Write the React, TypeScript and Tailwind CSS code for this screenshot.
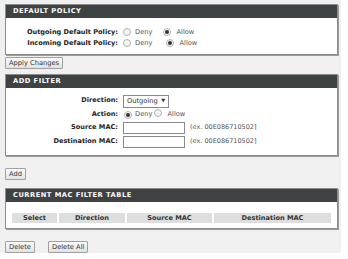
import React from "react";

const font = { fontFamily: '"DejaVu Sans", Verdana, sans-serif' };

function Radio({ checked }: { checked?: boolean }) {
  return (
    <span className="inline-flex h-[8px] w-[8px] items-center justify-center rounded-full border border-[#b5b5b5] bg-[#f4f4f4]">
      {checked && <span className="h-[4px] w-[4px] rounded-full bg-[#333]" />}
    </span>
  );
}

function Btn({ children }: { children: React.ReactNode }) {
  return (
    <button className="h-[12px] rounded-[1px] border border-[#a0a0a0] bg-gradient-to-b from-[#fbfbfb] to-[#e2e2e2] px-[3px] text-[6.7px] leading-[10px] text-[#333]">
      {children}
    </button>
  );
}

function Header({ children }: { children: React.ReactNode }) {
  return (
    <div className="h-[13px] bg-[#3e4243] pl-[7px] text-[6.7px] font-bold leading-[13px] tracking-[0.5px] text-white">
      {children}
    </div>
  );
}

function Label({ children }: { children: React.ReactNode }) {
  return (
    <div className="w-[112px] shrink-0 text-right text-[6.6px] font-bold text-[#222]">{children}</div>
  );
}

export default function App() {
  return (
    <div className="h-[259px] w-[348px] bg-white" style={font}>
      <div className="h-[253px] w-[341px] bg-[#f0f0f0] px-[5px] pt-[4px]">
        {/* Default policy */}
        <div className="w-[333px] border border-[#8c8c8c] bg-white shadow-[1px_1px_0_#9a9a9a]">
          <Header>DEFAULT POLICY</Header>
          <div className="flex flex-col pb-[5px] pt-[9px]">
            <div className="flex h-[11px] items-center">
              <Label>Outgoing Default Policy:</Label>
              <div className="ml-[5px] flex items-center text-[6.7px] text-[#555]">
                <Radio />
                <span className="ml-[4px]">Deny</span>
                <span className="ml-[11px]"><Radio checked /></span>
                <span className="ml-[5px]">Allow</span>
              </div>
            </div>
            <div className="flex h-[11px] items-center">
              <Label>Incoming Default Policy:</Label>
              <div className="ml-[5px] flex items-center text-[6.7px] text-[#555]">
                <Radio />
                <span className="ml-[4px]">Deny</span>
                <span className="ml-[14px]"><Radio checked /></span>
                <span className="ml-[5px]">Allow</span>
              </div>
            </div>
          </div>
        </div>
        <div className="mt-[2px] flex">
          <Btn>Apply Changes</Btn>
        </div>

        {/* Add filter */}
        <div className="mt-[5px] w-[333px] border border-[#8c8c8c] bg-white shadow-[1px_1px_0_#9a9a9a]">
          <Header>ADD FILTER</Header>
          <div className="flex flex-col pb-[7px] pt-[6px]">
            <div className="flex h-[14px] items-center">
              <Label>Direction:</Label>
              <div className="ml-[5px] flex h-[13px] w-[46px] items-center justify-between border border-[#8a8a8a] bg-white px-[3px] text-[6.7px] text-[#333]">
                <span>Outgoing</span>
                <span className="text-[5px]">▼</span>
              </div>
            </div>
            <div className="mt-[1px] flex h-[11px] items-center">
              <Label>Action:</Label>
              <div className="ml-[6px] flex items-center text-[6.7px] text-[#555]">
                <Radio checked />
                <span className="ml-[3px]">Deny</span>
                <span className="ml-[2px]"><Radio /></span>
                <span className="ml-[5px]">Allow</span>
              </div>
            </div>
            <div className="mt-[2px] flex h-[12px] items-center">
              <Label>Source MAC:</Label>
              <div className="ml-[5px] h-[12px] w-[62px] border border-[#8a8a8a] bg-white" />
              <span className="ml-[5px] text-[6.5px] text-[#555]">(ex. 00E086710502]</span>
            </div>
            <div className="mt-[2px] flex h-[12px] items-center">
              <Label>Destination MAC:</Label>
              <div className="ml-[5px] h-[12px] w-[62px] border border-[#8a8a8a] bg-white" />
              <span className="ml-[5px] text-[6.5px] text-[#555]">(ex. 00E086710502]</span>
            </div>
          </div>
        </div>
        <div className="mt-[12px] flex">
          <Btn>Add</Btn>
        </div>

        {/* Current MAC filter table */}
        <div className="mt-[8px] w-[333px] border border-[#8c8c8c] bg-white shadow-[1px_1px_0_#9a9a9a]">
          <Header>CURRENT MAC FILTER TABLE</Header>
          <div className="px-[6px] pb-[5px] pt-[11px]">
            <div className="flex h-[10px] gap-[2px] text-[6.6px] font-bold leading-[10px] text-[#333]">
              <div className="w-[45px] bg-[#dedede] text-center">Select</div>
              <div className="w-[66px] bg-[#dedede] text-center">Direction</div>
              <div className="w-[85px] bg-[#dedede] text-center">Source MAC</div>
              <div className="flex-1 bg-[#dedede] text-center">Destination MAC</div>
            </div>
          </div>
        </div>
        <div className="mt-[12px] flex gap-[13px]">
          <Btn>Delete</Btn>
          <Btn>Delete All</Btn>
        </div>
      </div>
    </div>
  );
}
